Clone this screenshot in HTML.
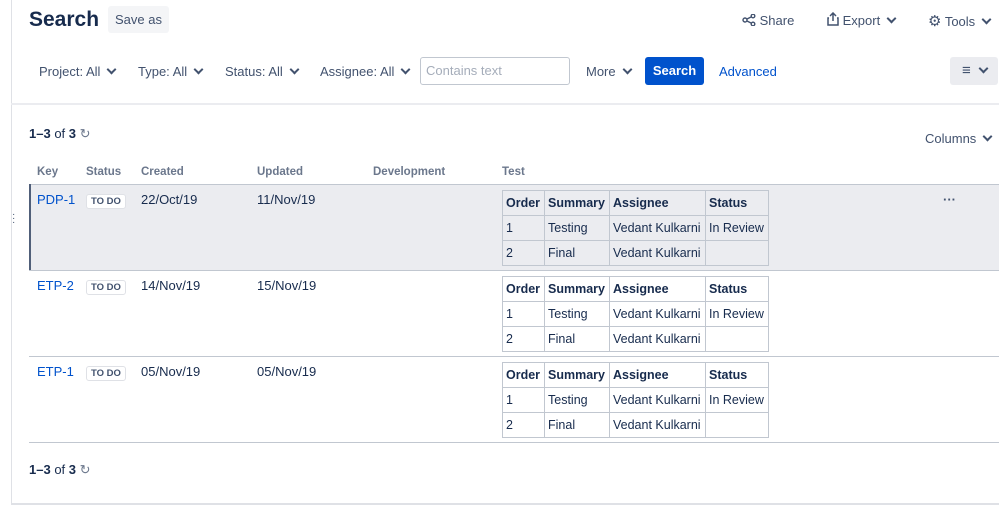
<!DOCTYPE html><html><head><style>
body{margin:0;width:999px;height:509px;position:relative;overflow:hidden;background:#fff;font-family:"Liberation Sans",sans-serif;color:#172b4d;font-size:13px}
.a{position:absolute;white-space:nowrap}
.chev{display:inline-block;width:5px;height:5px;border-right:2px solid #42526e;border-bottom:2px solid #42526e;transform:rotate(45deg);margin-left:8px;position:relative;top:-3px}
.f{color:#42526e;font-size:13px}
.h{color:#6b778c;font-size:11.5px;font-weight:bold}
.lz{display:inline-block;font-size:9.5px;font-weight:bold;color:#42526e;background:#fff;border:1px solid #dfe1e6;border-radius:3px;padding:1px 4px}
table.t{position:absolute;left:502px;border-collapse:collapse;font-size:12.5px;color:#172b4d;table-layout:fixed;width:266px}
table.t td{border:1px solid #c1c7d0;height:25px;padding:0 0 0 3px;white-space:nowrap;overflow:hidden;box-sizing:border-box}
table.t tr:first-child td{font-weight:bold}
.link{color:#0052cc}
</style></head><body>
<div class="a" style="left:11px;top:0;width:1px;height:503px;background:#dfe1e6"></div>
<div class="a" style="left:11px;top:503px;width:988px;height:2px;background:#dfe1e6"></div>
<div class="a" style="left:29px;top:8px;font-size:21px;font-weight:bold">Search</div>
<div class="a" style="left:108px;top:6px;width:61px;height:27px;background:#f4f5f7;border-radius:3px;font-size:13px;color:#42526e;line-height:27px;text-align:center">Save as</div>
<div class="a f" style="left:742px;top:13px"><svg width="14" height="12" viewBox="0 0 14 12" style="vertical-align:-1px"><circle cx="3" cy="6" r="2" fill="none" stroke="#42526e" stroke-width="1.4"/><circle cx="11" cy="2" r="1.8" fill="none" stroke="#42526e" stroke-width="1.4"/><circle cx="11" cy="10" r="1.8" fill="none" stroke="#42526e" stroke-width="1.4"/><path d="M5 5L9 3M5 7L9 9" stroke="#42526e" stroke-width="1.4"/></svg> Share</div>
<div class="a f" style="left:827px;top:12px"><svg width="12" height="14" viewBox="0 0 12 14" style="vertical-align:-1px"><path d="M6 1V9M3 4L6 1L9 4M2 6H1V13H11V6H10" fill="none" stroke="#42526e" stroke-width="1.5"/></svg> Export<span class="chev"></span></div>
<div class="a f" style="left:928px;top:12px"><span style="font-size:15px">⚙</span> Tools<span class="chev"></span></div>
<div class="a f" style="left:39px;top:64px">Project: All<span class="chev"></span></div>
<div class="a f" style="left:138px;top:64px">Type: All<span class="chev"></span></div>
<div class="a f" style="left:225px;top:64px">Status: All<span class="chev"></span></div>
<div class="a f" style="left:320px;top:64px">Assignee: All<span class="chev"></span></div>
<div class="a" style="left:420px;top:57px;border:1px solid #c1c7d0;border-radius:3px;color:#a5adba;line-height:26px;padding-left:5px;box-sizing:border-box;width:150px;height:28px">Contains text</div>
<div class="a f" style="left:586px;top:64px">More<span class="chev"></span></div>
<div class="a" style="left:645px;top:57px;width:59px;height:28px;background:#0052cc;border-radius:3px;color:#fff;font-weight:bold;line-height:28px;text-align:center">Search</div>
<div class="a link" style="left:719px;top:64px">Advanced</div>
<div class="a" style="left:950px;top:57px;width:48px;height:28px;background:#ebecf0;border-radius:3px;line-height:28px;color:#42526e;padding-left:12px;box-sizing:border-box;font-size:15px;font-weight:bold">≡<span class="chev" style="margin-left:9px"></span></div>
<div class="a" style="left:11px;top:103px;width:988px;height:2px;background:#ebecf0"></div>
<div class="a" style="left:29px;top:126px"><b>1–3</b> of <b>3</b> <span style="color:#6b778c">↻</span></div>
<div class="a f" style="left:925px;top:131px">Columns<span class="chev"></span></div>
<div class="a h" style="left:37px;top:166px">Key</div>
<div class="a h" style="left:86px;top:166px">Status</div>
<div class="a h" style="left:141px;top:166px">Created</div>
<div class="a h" style="left:257px;top:166px">Updated</div>
<div class="a h" style="left:373px;top:166px">Development</div>
<div class="a h" style="left:502px;top:166px">Test</div>
<div class="a" style="left:29px;top:184px;width:970px;height:86px;background:#ebecf0;border-top:1px solid #c1c7d0"></div>
<div class="a" style="left:29px;top:184px;width:2px;height:87px;background:#505f79"></div>
<div class="a" style="left:29px;top:270px;width:970px;height:1px;background:#c1c7d0"></div>
<div class="a" style="left:29px;top:356px;width:970px;height:1px;background:#c1c7d0"></div>
<div class="a" style="left:29px;top:442px;width:970px;height:1px;background:#c1c7d0"></div>
<div class="a" style="left:12px;top:213px;font-size:10px;color:#42526e;line-height:4px">·<br>·<br>·</div>
<div class="a" style="left:943px;top:192px;font-weight:bold;color:#42526e">···</div>
<div class="a link" style="left:37px;top:192px">PDP-1</div><div class="a" style="left:86px;top:192px"><span class="lz">TO DO</span></div><div class="a" style="left:141px;top:192px">22/Oct/19</div><div class="a" style="left:257px;top:192px">11/Nov/19</div>
<div class="a link" style="left:37px;top:278px">ETP-2</div><div class="a" style="left:86px;top:278px"><span class="lz">TO DO</span></div><div class="a" style="left:141px;top:278px">14/Nov/19</div><div class="a" style="left:257px;top:278px">15/Nov/19</div>
<div class="a link" style="left:37px;top:364px">ETP-1</div><div class="a" style="left:86px;top:364px"><span class="lz">TO DO</span></div><div class="a" style="left:141px;top:364px">05/Nov/19</div><div class="a" style="left:257px;top:364px">05/Nov/19</div>
<table class="t" style="top:190px"><colgroup><col style="width:42px"><col style="width:65px"><col style="width:96px"><col style="width:63px"></colgroup><tr><td>Order</td><td>Summary</td><td>Assignee</td><td>Status</td></tr><tr><td>1</td><td>Testing</td><td>Vedant Kulkarni</td><td>In Review</td></tr><tr><td>2</td><td>Final</td><td>Vedant Kulkarni</td><td></td></tr></table>
<table class="t" style="top:276px"><colgroup><col style="width:42px"><col style="width:65px"><col style="width:96px"><col style="width:63px"></colgroup><tr><td>Order</td><td>Summary</td><td>Assignee</td><td>Status</td></tr><tr><td>1</td><td>Testing</td><td>Vedant Kulkarni</td><td>In Review</td></tr><tr><td>2</td><td>Final</td><td>Vedant Kulkarni</td><td></td></tr></table>
<table class="t" style="top:362px"><colgroup><col style="width:42px"><col style="width:65px"><col style="width:96px"><col style="width:63px"></colgroup><tr><td>Order</td><td>Summary</td><td>Assignee</td><td>Status</td></tr><tr><td>1</td><td>Testing</td><td>Vedant Kulkarni</td><td>In Review</td></tr><tr><td>2</td><td>Final</td><td>Vedant Kulkarni</td><td></td></tr></table>
<div class="a" style="left:29px;top:462px"><b>1–3</b> of <b>3</b> <span style="color:#6b778c">↻</span></div>
</body></html>
